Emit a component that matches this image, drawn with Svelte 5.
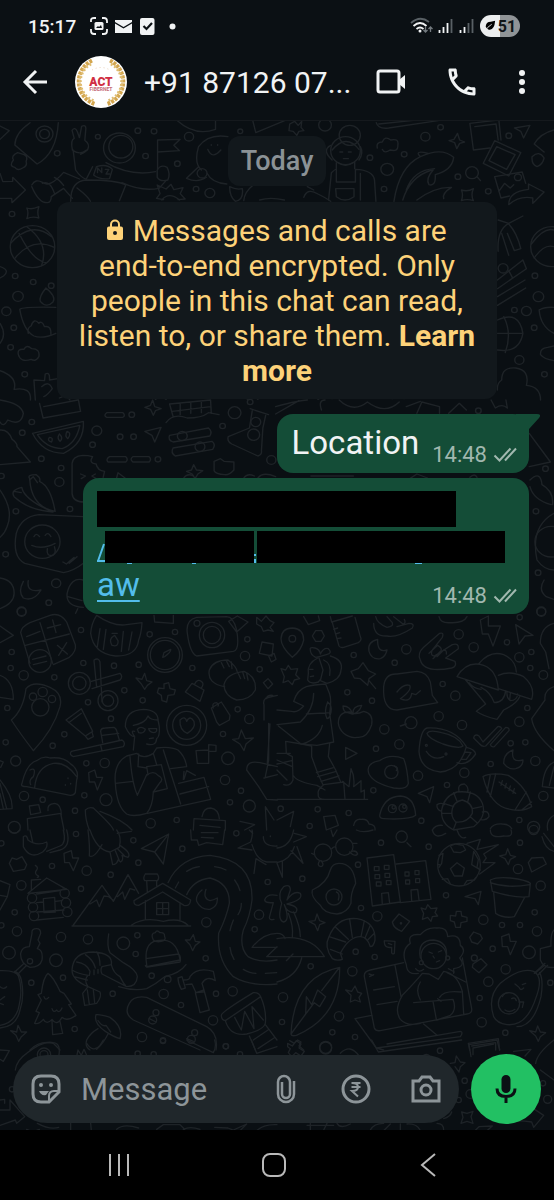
<script lang="ts">
  type Section = {
    x: number;
    y: number;
    sx: number;
    dots: number[][];
    lines: string[];
  };

  const messages = { first: "Location", second: "aw", time: "14:48" };
  let draft = $state("");

  // wallpaper doodles, drawn section by section at three times their size
  const third = 1 / 3;
  const wide = 0.3533;
  const sections: Section[] = [
    {
      x: 0, y: 120, sx: wide,
      dots: [
        [162, 100, 8], [277, 50, 7], [390, 32, 8], [436, 34, 8], [412, 108, 8], [502, 131, 8], [535, 50, 13],
        [680, 34, 7], [555, 207, 8], [594, 219, 14], [920, 15, 18], [1047, 113, 8], [1144, 103, 8], [1204, 50, 13],
        [1247, 22, 8], [1096, 148, 18], [1087, 207, 8], [1296, 170, 8], [1440, 47, 8], [1382, 214, 8], [1336, 158, 18],
        [34, 282, 8], [43, 468, 8], [94, 486, 8], [51, 529, 15], [18, 574, 13], [39, 623, 8], [30, 682, 8], [70, 763, 8],
        [145, 497, 8], [1424, 445, 14], [1514, 467, 8], [1524, 530, 15], [1456, 570, 8], [1490, 573, 14], [1512, 623, 8],
        [1470, 720, 13], [1541, 763, 8], [126, 42, 24], [126, 42, 14], [338, 84, 45], [342, 80, 34], [92, 380, 63],
        [1562, 380, 60], [572, 160, 14], [978, 92, 42], [990, 46, 30], [1466, 172, 10],
      ],
      lines: [
        "M85 8Q42 40 42 75L105 132Q160 100 165 8M50 98q-20 10-12 22q-14 18 4 22q8 12 22 2q14-6 10-20q6-14-6-20z",
        "M0 18L26 32L0 58M0 160L8 185L36 184V172L72 210L34 248L33 235H0",
        "M205 90q-6-30 5-35l-6-24q8-12 15 4l6 18l6-34q12-6 12 6l-3 36q16 12 8 28q-10 10-20 14M207 90L214 150q14 22 30 28L262 140M207 92q20 14 38-2",
        "M265 165l8-25q30-10 45 8l-8 28q-28 4-45-11zM276 158v-14l12 14v-14M298 148h10l-8 14h10",
        "M300 128Q370 170 440 155M345 188Q400 215 450 205L470 182M445 150q10-18 28-8q10 20 2 38q-22 6-30-8z",
        "M446 148V60L510 58L492 76L508 92L446 96M200 244Q200 182 245 180Q330 180 356 195L338 242M218 204Q250 230 256 244",
        "M90 195q10-20 30-8q20 18 60-30l45 20M90 200q20 50 45 48q10-2 10-18l35-25l25 30M120 190q22-10 34 30M180 196q-10-16-26-24",
        "M500 0Q550 50 610 28V0M645 50Q590 40 562 80Q548 130 570 150M528 175l34-35M586 160Q600 190 642 192M528 175Q560 190 584 172M588 88Q600 120 625 90M598 74v2M616 74v2",
        "M445 195l25 12l14-14l8 16l26-6l-8 18l14 16l-20 2M445 195l8 26l-10 14l20 4M458 240q20-26 50 0",
        "M650 200q0 30 16 44q24-4 20-38q-18 4-36-6zM716 196q-24 20-26 46M735 240q30-10 70 0M860 232q10-30 40-10q20 10 36 22M870 200l18 10",
        "M715 0L724 38L810 0M820 12l14-8l10 12l10-12l-2 18l8 10l-14 2l-6 12l-10-12l-12-2z",
        "M940 90Q980 40 1016 88M936 76Q910 90 940 120M1020 80Q1030 100 1016 120M952 128v20M1004 126v20M958 128q20 16 40 0M962 96h8M986 96h8M972 116h14",
        "M952 148V186H1006V148M930 240L938 158Q950 146 952 148M1006 148Q1056 150 1060 180L1064 244M950 206H1002V230Q976 250 952 230zM1020 160V240",
        "M1065 8Q1070 28 1100 24L1240 2M1072 12L1180 0M1068 84q-4-18 14-18q8-20 24-6q24-6 20 16q2 20-22 14q-16 12-22-2",
        "M1115 244Q1130 140 1190 110Q1250 80 1284 112Q1280 150 1232 164M1190 110Q1170 90 1212 100M1232 164Q1234 200 1214 194Q1204 176 1226 150M1150 210Q1170 150 1230 146M1140 240Q1160 170 1222 150",
        "M1295 40l6 20l14 6l-14 4l-8 16l-6-18l-16-6l14-4zM1350 170l10 12M1180 240Q1230 200 1278 202Q1250 220 1256 236",
        "M1330 10L1340 90L1386 84M1330 10L1412 0L1418 60M1344 20L1404 12L1410 60M1400 62L1474 98L1440 168L1368 130zM1406 80L1458 104L1434 148L1384 122z",
        "M1400 170L1478 156L1488 190M1400 170L1418 234L1442 228M1412 214l16-24l16 14l10-10M1440 254Q1440 214 1496 208V192L1540 216L1508 250V234Q1470 226 1440 254z",
        "M1456 24L1500 16L1482 54L1474 34zM1568 30Q1530 40 1512 72L1540 96M1506 110q20-20 34 4q-4 20-20 26q-16-6-14-30",
        "M1306 210q18 6 34-4q-8 18 0 36q-18-6-34 0q6-18 0-32zM76 264q14 6 34-4q-6 18 0 34q-18-6-34 2q6-18 0-32z",
        "M30 370Q90 300 146 350M42 415Q90 350 154 382M76 320Q140 370 118 436M54 340Q90 420 130 428M1504 372Q1540 320 1568 330M1512 414Q1540 370 1568 380",
        "M130 504Q160 530 150 546Q132 566 114 544Q110 530 130 504zM56 568Q66 560 158 562M56 568Q66 630 96 648Q120 658 158 640M80 640q-4-16 8-22q8-26 22-8q8-10 16 10q20-4 18 24",
        "M0 440Q30 450 10 468L0 474M0 610q20 34 0 60M52 704q-4-18 16-16q6-16 22-2q24 0 20 24q-8 16-22 8q-30 10-36-14M0 752Q50 770 40 808Q90 800 86 840M100 840L96 780L126 782l2-20q14-8 12 18l24-4M118 800q20-20 30 6q-14 20-24 24",
        "M1410 300l30 10M1440 310l40-22M1440 310q-34 20-30 84M1440 312Q1464 340 1474 386l-18 6L1436 340M1420 340l20 66",
        "M1408 480L1480 420M1408 506L1490 446L1480 420M1408 530L1486 480M1440 452l10 20M1408 556L1488 504",
        "M1408 600Q1470 570 1480 640Q1470 700 1408 690M1426 590Q1450 640 1430 698M1408 640H1480M1526 570Q1540 560 1568 562M1526 570Q1530 620 1568 640M1530 704q-2-20 20-22l18-4M1530 704q10 14 38 18",
        "M1420 780Q1420 740 1460 744Q1500 750 1490 796Q1530 800 1530 840M1420 780Q1406 790 1408 810M168 834q20-12 30 6M440 838q16-12 30 0M700 838q10-18 30 0M900 838l20-14l20 12M1110 836q16-16 34 0",
      ],
    },
    {
      x: 0, y: 400, sx: wide,
      dots: [
        [90, 66, 8], [63, 98, 8], [274, 92, 14], [262, 134, 8], [117, 176, 8], [173, 204, 8], [168, 246, 13], [198, 327, 8],
        [45, 334, 8], [16, 463, 8], [373, 44, 8], [340, 110, 8], [378, 110, 8], [447, 178, 8], [630, 78, 8], [664, 38, 18],
        [708, 6, 8], [724, 66, 14], [718, 104, 17], [768, 180, 13], [516, 108, 14], [566, 140, 14], [4, 228, 8], [120, 425, 50],
        [159, 550, 13], [138, 608, 8], [61, 634, 13], [1354, 32, 8], [1517, 334, 8], [1523, 518, 8], [1532, 634, 13],
        [1560, 425, 46], [1544, 206, 8],
      ],
      lines: [
        "M0 0Q60 10 66 40Q60 80 22 60Q10 84 0 66M112 10L122 54L228 34L222 0M124 20L220 0M0 90Q24 88 34 118Q50 130 48 140L86 186L0 194",
        "M92 100L236 64Q240 130 180 160Q120 160 92 100zM106 104L226 76Q216 130 176 146Q130 144 106 104M140 112q12 0 6 14q-14-4-6-14M168 102q12 12 2 22q-10-10-2-22M190 94q14 4 2 22q-10-8-2-22",
        "M302 38h46q8 8 0 14h-46q-10-6 0-14M310 170h46q8 8 0 16h-50q-8-8 4-16M376 170h46q8 8 0 16h-46q-10-8 0-16M432 0l6 20l18 6l-16 6l-6 14l-8-18l-16-6l16-6z",
        "M480 12L490 50M480 12L596 0L598 40M470 68q20-30 60-14q40 0 60-16l30 6M488 34L596 20M510 10v34M540 6v34M570 6v32",
        "M410 94L456 82L438 126L430 106zM480 106L590 84q12 10 4 24L490 126q-16-6-10-20M490 144L600 124q12 10 2 24L496 168q-14-10-6-24",
        "M708 26L760 44M714 32L706 84L646 110q-4 14 10 22L730 168q12-4 10-16L744 84L752 46",
        "M606 184l18-8l10 8l28 2v24q-14 16-26 14q-26-2-30-12zM548 194l8 16l18 2l-14 10l-8 14l-8-14l-16-8l14-4zM330 234l4-16l20 16",
        "M204 280V190Q206 168 234 166Q250 166 262 170q-12 20 10 22q4 20 24 22l-4 18M204 280q2 26 34 26M228 222l14 6l-12 8M270 222l-10 6l12 8",
        "M84 236q-8-12 18-12q14 10 10 20Q144 260 156 334Q88 320 84 236zM62 264Q70 300 150 336M62 262Q28 270 40 290Q80 330 150 336M84 240l10-10l12 18M40 274l20 4",
        "M235 350L110 344Q60 350 46 400Q34 470 70 490L180 518Q210 512 236 490M96 410q6-14 16 0M128 406q8-12 16 4M90 436Q120 450 156 430M134 446q-4 24 16 20q10-8 4-26M178 486l10 6l22-20M196 490l22-20",
        "M0 270Q40 330 20 380Q14 400 0 412M0 534Q40 540 40 580Q40 610 0 626M66 544Q50 576 66 594Q96 606 116 570Q74 580 80 542M236 540Q200 530 190 580Q186 620 236 622M214 640l6-14M192 590l40 12",
        "M780 20Q850 0 870 0M780 42L846 2M910 30q-10-30 10-30M960 0q40 40 80 6q50 40 90 0M1150 20l40-16M1180 40l14-34l50 14v20M1270 40l30-30l20 20M1390 0l12 24q20-14 34 0l-4-24",
        "M1498 100L1558 186L1498 200M1500 240q30-30 34 14q34 20 30 60M1500 260q10 40 60 54M1568 340Q1500 380 1520 480Q1540 510 1568 510M1540 540q-18 30 6 50l22 8",
        "M520 234q10-16 28-6M690 234q10-16 30-6M730 234q14-20 50-4M880 228h120M1160 236l20-14l30 12M1330 232q14-14 20 0",
      ],
    },
    {
      x: 0, y: 610, sx: third,
      dots: [
        [243, 60, 8], [449, 73, 8], [525, 66, 8], [591, 40, 9], [636, 75, 38], [636, 75, 26], [742, 88, 8], [735, 138, 14],
        [35, 126, 8], [32, 174, 8], [71, 196, 14], [163, 202, 8], [250, 159, 8], [342, 167, 8], [416, 164, 8], [577, 174, 8],
        [779, 178, 8], [373, 241, 8], [428, 271, 8], [264, 277, 8], [333, 326, 8], [193, 373, 8], [158, 407, 8], [17, 397, 8],
        [22, 294, 8], [47, 453, 15], [259, 460, 8], [314, 459, 14], [713, 298, 8], [748, 327, 14], [669, 372, 8],
        [684, 445, 19], [675, 510, 14], [723, 542, 8], [690, 577, 8], [748, 588, 18], [72, 558, 14], [128, 569, 8],
        [253, 556, 8], [225, 602, 8], [318, 569, 18], [452, 640, 14], [530, 630, 8], [43, 652, 18], [65, 6, 13], [495, 135, 52],
        [495, 135, 44], [120, 153, 34], [121, 292, 26], [99, 260, 11], [128, 246, 14], [156, 267, 11], [238, 220, 33],
        [238, 220, 20], [324, 272, 30], [324, 272, 17], [560, 346, 60], [560, 346, 42],
      ],
      lines: [
        "M62 68Q64 50 90 38L150 16Q180 6 200 36L226 104Q230 124 208 142L160 164M62 68L90 160M120 38L158 160M76 106L208 72M80 80L120 64M142 54L182 44M158 30L168 68M172 106L202 132M200 98L176 136M98 148l40-10M100 164l40-10",
        "M0 48L40 76L0 98M272 70Q274 40 290 16Q340 50 380 44L426 38Q424 70 416 90Q410 140 346 138Q280 130 272 70M300 56l-8 54M318 58l-8 60M344 76q-20 10-8 30q20 6 18-14zM370 64l-6 60M396 66l-10 54M336 70h16",
        "M462 16l2 20l56 4V16M488 142l4-14l20-10q2 8-18 22zM562 70Q556 30 590 22L680 20Q700 20 710 60Q720 120 700 124L590 138Q570 130 562 70M686 34l26-16l32 18l-34 30zM770 22l14 12l14-16l12 14l12 6l-12 14l10 12l-16-4l-14 4l-6-14l-14-8z",
        "M786 96l34 6l-4 36l-38-8zM806 138l16-8l6 18l-14 8zM790 218l14-12l14 16l-14 14z",
        "M78 236Q100 210 150 232Q190 250 180 290Q160 360 100 422Q60 370 34 330Q70 300 78 236M0 196Q40 210 40 268L0 262",
        "M282 150q14-8 18 6l6 120M282 152l8 80M274 214L360 190q10 10 0 20L276 236M408 204l18 4l8-18l6 22l16 4l-14 10l-8 12l-10-16zM492 222l14-4l4 18l16 4l-4 14l-18 2l-4 20l-14-4l-2-16l-12-8l4-14l16 2z",
        "M556 246l20-26l36 20l-12 34zM584 222q8-16 20-8q10 6 0 20M628 180Q620 220 674 230M628 180Q640 150 684 150Q710 170 712 186M672 224Q680 190 732 184Q770 200 766 240Q750 270 710 270Q672 256 672 224M664 158l8 16M680 154l8 16M694 156l2 20M714 188l8 18M728 186l6 20M740 190l4 20",
        "M198 330L244 296L278 364L256 378zM206 338l38-28M256 378l8 10l16-8l-4-14M634 294l30-18l26 40l-2 14l-30 16l-8-10zM640 294q-6-16 10-16q8 6 4 10M698 388l18-2l8-26l12 26l24-2l-22 18l-6 20l-12-20z",
        "M214 424L366 390q12 8 4 20L220 440q-14-6-6-16M302 406l4 16M308 398L302 364q0-10 14-10l26-2q8 4 10 18l6 20M306 376l50-6",
        "M540 330q16-14 20 4q10-20 22 0q6 20-20 36q-24-10-22-40",
        "M400 420L404 380Q390 380 376 350Q376 300 430 298Q474 300 474 330L478 350Q480 380 470 386Q468 410 440 402M404 380Q390 360 404 364M400 346Q436 340 444 318Q450 330 474 330M412 358q10-12 24 0q-4 14-20 10zM446 356h24q2 12-10 12q-12-2-14-12M448 386l12-2",
        "M346 520Q340 460 380 438L410 430Q430 450 460 430L470 414Q510 408 534 420Q556 440 560 470L512 476M346 520L400 514M390 440Q396 520 412 556L440 494M346 520Q350 590 380 612Q400 622 440 610Q458 590 460 546L502 536L484 464L440 470L444 494M416 432L414 470L440 474M460 430l10 34",
        "M440 496q20-16 34 0q20 10 4 24l-18 26M490 420L542 582M442 610L632 568L612 502L536 520M540 552L626 530M552 508l8-26l26 14M552 484l-2 24M588 422l4 38h34v-40zM626 404l22 2v18h-22z",
        "M66 520Q80 460 110 452Q130 436 150 444Q190 440 210 460Q240 480 230 510L226 548Q220 560 200 554L80 530Q60 530 66 520M104 532Q110 470 160 460Q200 456 230 500M90 480q20-10 10 20q-14 10-8 24",
        "M204 504v2M196 524v2M212 520v2M266 488l18-8l6 22h18l-16 38l-8-24h-16zM0 452l10 4l-8 16M0 510Q40 560 36 596L0 598M0 520l20 76M0 550l10 46",
        "M88 588l28-4l6 24l-30 6zM84 660l-2-34l100-16l10 50M144 602q-4-20 20-22q20 2 20 36M256 600q10-10 24-6Q340 650 340 660M256 600q0 30 12 60M300 604Q370 630 396 660",
        "M580 660l2-34l94 6v28M606 620q4-26 26-26q24 4 26 32M600 646l60 6M720 634l44 10l-30 16M800 660l-4-70l26 40M792 330V284q-4-12 6-20l34-8M800 266q0-12 18-10M810 342l-8 116M740 480Q740 450 780 458L832 470M740 480L776 530L800 568L832 570M792 504l40-10M806 340v110l-10 50",
      ],
    },
    {
      x: 277, y: 610, sx: third,
      dots: [
        [46, 86, 10], [230, 135, 8], [388, 118, 14], [353, 158, 8], [545, 73, 14], [590, 112, 14], [690, 97, 8], [763, 126, 8],
        [727, 142, 14], [760, 174, 8], [799, 195, 13], [497, 222, 8], [535, 257, 14], [211, 247, 8], [285, 272, 8],
        [485, 319, 14], [555, 345, 14], [402, 338, 18], [322, 358, 14], [297, 416, 8], [367, 403, 14], [751, 294, 8],
        [727, 335, 14], [701, 400, 8], [745, 397, 8], [775, 453, 14], [641, 462, 8], [562, 488, 14], [510, 525, 8],
        [423, 497, 14], [289, 541, 8], [799, 558, 14], [727, 630, 8], [770, 652, 18], [433, 632, 8], [215, 609, 8],
        [122, 598, 8], [11, 596, 8], [98, 648, 8], [793, 6, 13], [728, 22, 8], [346, 596, 12], [378, 594, 12], [343, 486, 20],
        [448, 406, 3], [507, 432, 3], [350, 592, 5], [382, 590, 5],
      ],
      lines: [
        "M46 142Q12 110 12 86Q14 54 46 54Q80 56 80 90Q74 120 46 142M116 62h18l8 16l-10 16h-16l-10-16zM80 20l14 24l34-12l-4-14M160 20l4 16l62-18M166 38L186 108Q190 114 200 112L244 98Q256 90 250 80L234 22M170 58l12-4M176 72l12-4M180 86l12-2",
        "M290 40Q290 80 330 78Q360 84 406 54Q414 40 396 40L360 50M296 20Q300 40 330 52Q350 50 346 38L330 20M350 20l28 22q10-2 4-14M302 88Q270 96 276 124Q284 150 310 146Q326 140 330 120Q300 130 302 88",
        "M488 70q14-4 8 12L466 120q-8 16 6 18L526 104q20-6 18 12L506 144l28 10q6 16-10 20Q440 190 430 150Q420 130 440 112zM456 130l26-24q14 8 10 16L468 146M480 140l20-20q10 0 8 12",
        "M486 20Q490 40 520 38Q560 40 570 20M610 30l24-12v30h36l-22 60l-14-36h-18zM716 44L768 76L744 78L726 102zM831 40Q790 50 790 100L806 126l10 50",
        "M540 200Q570 150 620 166Q660 180 664 240zM606 160Q640 120 680 134Q716 150 718 186M664 196Q700 180 740 200Q776 230 764 268L664 236M566 210Q600 250 626 282L598 304Q620 320 660 328L680 300Q720 280 728 260M576 218q14 18 36 20M612 232q28 14 40 46q30 0 34-36M690 244q-2 20 10 28q20 0 22-20M700 250l-2 20",
        "M12 176l14 4l8-14l8 12l20-2l-6 18l12 12l-16 4l-6 14l-12-12l-16 6l4-18zM222 184l22-8l14-18l16 24l22 10l-20 14l-4 20l-22-20l-18-2zM276 212l20 24",
        "M320 230Q324 190 360 192L420 184Q450 186 460 216L466 256L482 278L360 300Q316 300 320 230M360 246Q380 220 398 226Q406 240 370 266Q400 280 404 250L416 254L430 242",
        "M370 348l18-6M184 340Q184 304 220 306Q236 316 260 304Q290 310 284 344Q270 386 240 382Q220 386 200 370Q186 356 184 340M226 312l-14-4q-14-2-14-20q22 0 28 24M228 308q0-20 26-22q-6 20-26 26",
        "M426 424Q430 360 450 354Q530 350 568 410Q550 480 490 486Q430 480 426 424M450 370q8-12 44-2q50 10 64 40q-10 10-60-6q-46-18-48-32M568 412q26 6 28 20Q570 470 540 458M552 448l12-22l18 2l-14 20zM448 424q20 30 52 16",
        "M592 378q6-6 14 0l12 18l44-46q10-2 12 6L626 408q-10 4-18-6l-18-18zM640 404L686 352q12 0 10 10L652 410q-10 2-12-6M206 412L240 430L206 448zM276 492Q264 460 308 452Q340 430 380 446Q390 470 394 520Q390 540 350 534Q290 520 276 492M352 468q14 4 6 14",
        "M708 420Q680 430 680 460Q694 480 716 476Q738 470 738 450Q700 460 708 420M424 550L470 530L458 578L450 560zM618 500Q640 486 694 496Q750 530 764 590Q740 606 700 598Q640 590 618 500M640 494L630 546M656 492L640 560M748 546L714 600M764 576L734 600M666 516L716 550M676 512l-4 14M688 520l-4 14M700 528l-4 14M712 536l-4 14",
        "M308 616Q320 560 370 558Q412 560 416 616Q400 630 320 626Q308 626 308 616",
        "M494 600Q500 560 540 546Q600 540 616 580Q630 620 590 650L530 660Q490 640 494 600M526 596Q530 576 556 570Q590 580 586 610Q570 640 536 636Q520 620 526 596M546 544q-6-22 16-22q14 8 10 24M494 604q-16-4-14-20q14-8 22 0M616 606q20-6 20 14q-10 14-26 8M500 580l30 10M530 548l10 26M580 546l-8 30M614 590l-28 6M600 638l-20-18M530 656l8-20M496 610l28 0M466 660q10-16 30-14",
        "M831 230Q800 240 804 270L764 326Q770 370 831 422M831 456Q800 470 796 530L831 534M831 470l-14 56M140 620l34-4l10 30l-36 14zM230 646q4-20 22-18q20-2 24 14q20 2 18 18M640 656q10-16 36-14q20 0 28 14M0 630L50 604L40 650M812 660q-6-30 19-44",
        "M100 120q-4-10 14-6q14 4 16 18q10-20 24-16q14 14-6 18q-20 6-32 8q-16-8-16-22M122 144Q90 160 94 190L92 210Q100 224 124 216L132 206M126 144L138 180L130 212M160 138Q200 150 192 180Q190 210 150 220L130 212M140 150q24 10 18 46M98 178h10M100 200l10-2",
        "M88 230Q110 224 146 222L158 252Q164 270 158 310L170 396L120 406L72 402L4 348M88 230Q60 240 50 274L80 288Q60 310 44 304L0 300M110 250Q110 300 70 336L0 344M88 312l70-4M152 276q14 10 10 30q-4 20-12 20q-10-20 2-50M136 346q-10 40-60 56",
        "M26 394L28 430L46 440L48 510Q40 530 20 524M26 394L74 402L104 408V440L122 490L138 524M0 430h40M0 462l44-10M0 480l30 30M158 400L154 440L176 480L190 514M118 488l54-16M122 500l56-16M132 514l54-16M140 524Q120 540 124 552Q120 570 150 568H204L200 516L140 524M50 498Q60 516 120 526L144 540M0 568H272M196 514L216 530L222 476Q234 500 230 530L252 512V546L262 540V568M0 450L46 470",
      ],
    },
    {
      x: 0, y: 830, sx: third,
      dots: [
        [228, 12, 8], [400, 31, 8], [156, 108, 8], [260, 122, 14], [332, 134, 8], [415, 98, 8], [547, 56, 8], [709, 10, 8],
        [64, 166, 14], [243, 176, 8], [44, 247, 8], [51, 304, 14], [183, 321, 14], [264, 328, 14], [27, 368, 19],
        [168, 391, 19], [370, 340, 19], [412, 316, 8], [407, 372, 8], [619, 277, 14], [617, 385, 8], [803, 156, 8],
        [777, 254, 14], [764, 298, 8], [698, 484, 14], [648, 491, 8], [639, 571, 14], [678, 649, 8], [455, 437, 8],
        [491, 492, 14], [543, 525, 8], [338, 491, 8], [189, 443, 8], [94, 458, 8], [224, 597, 8], [426, 621, 14],
        [489, 631, 8], [90, 394, 8], [96, 204, 14], [99, 232, 14], [102, 258, 14], [194, 190, 14], [198, 218, 14],
        [202, 246, 14], [4, 40, 8], [4, 286, 8], [503, 448, 10], [468, 548, 9], [458, 570, 12], [584, 608, 9], [574, 628, 12],
      ],
      lines: [
        "M70 20q10-8 14 10Q110 50 140 36Q146 50 128 66Q90 90 70 50zM90 0l8 36M190 0Q200 40 180 48L140 64M200 0Q214 50 180 60L150 68M26 0Q44 18 60 0",
        "M264 0Q270 50 268 78Q280 84 296 60L306 44M270 0Q290 60 330 66L358 52Q366 20 350 0M352 10L394 4M330 66L338 104Q350 104 354 90L362 96Q372 90 366 76L384 82Q396 70 360 46M346 62l12 30M354 58l20 20",
        "M424 56L506 12L490 102L464 66zM464 66L500 20M192 70L214 62L218 84H236L220 122L208 98H194zM28 100L36 84L50 88L66 80L80 104L74 118L40 124zM572 0L574 30H592L596 46L620 38L668 44L674 0M604 8h50M604 22l36 2",
        "M106 106q10 6 4 14q-8 10 2 16q8 4 0 6M84 190L140 144L200 178zM94 180V150L122 148M110 192L180 182M110 218l20-2M166 214l20-2M110 270L190 262M130 206l34-4l2 44l-34 2zM112 246l80-6",
        "M218 288L306 166L340 214L384 134L416 190M270 222L290 210L298 230L312 198L326 200L342 212M352 200L368 186L374 208L390 176L404 180M216 288H572M402 212L488 160L572 210Q570 230 552 226L488 186L416 226Q400 226 402 212M436 212V268M540 218V270M394 286Q430 260 490 274Q540 262 564 286M470 218h36v36h-36zM488 218v36M470 236h36M436 132h36q8 12 0 20h-38q-6-8 2-20M440 152l2 34M470 152v16",
        "M504 158Q540 80 630 76Q760 90 756 210Q750 260 730 300Q716 350 744 380Q780 400 831 390M560 194Q580 150 630 144Q690 160 688 220Q680 260 656 310Q650 390 700 440Q750 470 831 462M526 174l10-18M560 124q18-12 38-14M644 110q20 2 34 10M704 150q12 16 16 32M724 220q0 20-10 34M700 270q-8 20-10 32M690 352q2 20 12 36M730 418q20 12 38 12M796 430l34-2",
        "M606 180Q586 196 590 214Q602 240 630 238Q654 230 652 204Q640 210 630 212Q608 206 618 178M556 330l14 0l10-16l6 20l14 2l-14 10l-8 16l-8-18zM756 352Q790 310 831 310M756 352H831M800 380L831 350M800 380H831M831 196Q800 190 794 210Q796 220 820 218L808 262Q808 272 822 268",
        "M714 54L752 36Q760 10 756 0M716 54L756 60M762 130L768 86L798 104M756 44Q770 90 800 96L831 96M790 20Q790 50 831 48M748 0l10 10M811 18v2",
        "M0 152L30 164L22 200L0 196M22 200L0 240M96 310q-2-14 14-14q12 0 12 14L114 330L120 340L112 356Q130 360 126 390Q120 412 90 412Q60 400 62 370Q66 350 88 350zM80 406L56 430M70 402L44 426M0 422Q50 420 56 440Q70 480 54 540Q40 580 0 586M44 424Q60 430 64 450Q74 500 60 540Q50 590 0 594M0 470q10 10 20 0M0 510l14-10M0 520l10 4",
        "M144 430Q130 440 124 490L114 494L124 510L108 544L118 548L104 580Q116 584 130 568Q140 586 156 568Q170 590 186 562Q200 576 228 556L206 524L214 522L192 490L180 484Q160 440 144 430M132 500q4 14 14 2M156 536q4 14 14 4q8 12 16-6M156 572L158 614L188 610L180 574M32 602l18 4l4-20l10 20l16 0l-16 14l-8 14l-8-18z",
        "M264 470Q216 450 216 420Q220 366 280 366Q340 370 334 404L306 410Q300 420 306 432L380 470Q410 470 412 440Q410 420 370 398L330 368Q320 350 326 312M334 404Q340 430 360 440Q370 460 376 466M216 420Q230 430 264 436M230 396Q260 400 270 424M256 374Q280 390 286 414M290 366Q300 380 300 406M264 436Q250 450 264 470L248 490L254 526L290 520Q306 500 300 486L264 470M262 480l6 44M280 480l4 38M270 424l-2 12M282 420v14M294 418v12M222 440L262 450",
        "M356 470Q400 484 440 476Q470 460 494 440Q540 430 558 404M440 404Q430 340 470 332Q530 320 540 390L440 410zM438 386L536 372M436 406q0 8 16 4L540 396q4-10-2-22M460 330q-10-20 6-22q4-10 14 0q14-2 14 12q6 10-10 14q-14 4-24-4",
        "M388 520Q400 496 440 502L620 590Q656 610 648 660M388 520Q370 550 400 570L600 660M448 566l20 10M560 626l20 8M288 554Q300 552 330 562Q370 590 360 626Q340 620 316 604Q280 580 288 554M294 596Q270 610 260 630Q254 650 270 660M324 612Q310 640 290 658M294 572q14 20 24 14l14 20M90 660Q120 630 160 640L180 660",
        "M534 444l12-4l10 34l-12 4q-10-18-10-34M552 450Q570 450 570 440Q590 410 640 424L646 452Q620 436 606 460L612 480L588 488L576 462L558 464M586 488L600 548L628 540L612 480M588 488l22-2",
        "M664 556Q664 546 760 488Q776 486 782 500L676 572Q664 570 664 556M676 572Q690 620 740 612Q790 600 796 580Q800 540 782 500M704 562L724 600L734 544L762 596L756 530L790 570M748 618L766 660M796 584L831 630M760 630l44-30M774 656l48-32",
      ],
    },
    {
      x: 277, y: 830, sx: third,
      dots: [
        [312, 38, 8], [455, 50, 8], [729, 38, 8], [723, 117, 14], [76, 146, 8], [243, 104, 8], [374, 20, 17], [138, 68, 26],
        [202, 50, 26], [171, 201, 24], [252, 234, 8], [301, 259, 14], [507, 196, 8], [619, 269, 14], [675, 285, 8],
        [729, 285, 8], [773, 247, 8], [791, 167, 14], [780, 304, 14], [756, 367, 19], [647, 356, 8], [686, 418, 14],
        [634, 455, 14], [608, 504, 8], [614, 577, 14], [685, 608, 8], [236, 365, 8], [293, 381, 8], [101, 409, 8],
        [226, 424, 14], [18, 502, 14], [186, 559, 14], [15, 576, 8], [166, 607, 8], [234, 621, 8], [820, 458, 8],
        [546, 104, 64], [470, 378, 38], [696, 520, 32], [372, 280, 2], [592, 384, 9], [770, 0, 14], [146, 652, 18],
        [433, 398, 6], [512, 384, 6],
      ],
      lines: [
        "M0 54Q40 50 50 0M52 10L88 20L50 36M42 62L78 100L60 50M0 98Q40 90 52 50M16 94V142L0 100M162 0l6 20l12-20M238 0q20 10 50 0M390 38l12 12M466 0q8 30 40 10M540 0q10 30 26 22M640 0q0 26 40 18q30 4 22-18",
        "M164 56q8-8 12-4M112 74l-8-4M128 92q-10 16 4 18q12-4 0-18M228 40h12M224 64q14-4 18 8q-8 10-24-6",
        "M186 100Q230 100 236 160Q220 190 222 220Q210 250 180 252Q140 250 130 226Q100 200 106 180Q150 160 160 120Q166 100 186 100M178 186q12 4 6 24",
        "M270 84L350 74L370 216L286 228zM358 102L446 92L462 208L370 218M292 110h14v12h-14zM322 106h14v12h-14zM294 134h14v12h-14zM324 130h14v12h-14zM298 156h14v12h-14zM328 152h14v12h-14zM316 224L314 190L334 188L338 220M384 126h12v12h-12zM414 122h12v12h-12zM386 150h12v12h-12zM416 146h12v12h-12zM404 212L402 180L422 178L426 210",
        "M540 98L562 114L556 138H532L520 116zM486 76L498 70L494 100L486 112M520 48L536 42L558 46L566 60L550 68L530 66zM590 64L604 88L600 112L610 120L584 104zM496 148L512 146L520 162M562 164L570 152L592 150L598 142M570 40L610 28L600 58L664 44L620 72L628 84L618 98L654 98L608 132M482 104h6",
        "M668 78l18-4l6-18l8 20l16 4l-16 8l-6 16l-10-18zM754 98l10-14l34-2l10 20l-44 24zM640 150Q660 140 700 144Q750 150 760 160L756 200Q720 206 646 184zM640 158Q690 176 758 164M650 188L656 250Q680 266 712 260L742 204M564 200L612 184L604 224L594 206zM795 20q10 40 36 44M800 10l31 40",
        "M14 220Q0 190 20 170Q40 160 40 180L30 210Q50 180 70 190Q80 210 30 222Q70 230 56 248Q30 250 22 224Q40 270 20 276Q0 270 14 220M34 250Q50 290 46 320M50 246Q70 290 70 320M0 310q20 0 24 16M0 326Q100 310 142 380H0M74 384Q60 440 0 456M28 392l20-20M96 274l18-2l6-20l8 20l16 6l-16 6l-6 18l-8-18z",
        "M166 386Q140 350 156 320Q180 260 240 266Q296 276 294 330Q290 350 280 350Q270 320 250 320Q216 320 190 370L196 388Q180 394 166 386M156 320L206 336M176 292L214 328M218 268L226 322M262 272L252 320M280 286L264 324M160 358L196 372M272 330l20-20M346 276l20-24l32 22l-24 30q-24-8-28-28",
        "M432 234l14 4l6-14l10 12l18-2l-6 14l8 10l-16 2l-4 14l-10-12l-16 6l4-18zM520 256l16 2l2-14h14l2 14l16 4v12l-18 4l-2 14h-14l-4-16l-12-4zM322 332L354 334L352 370Q346 374 344 368V352Q320 356 322 332M334 340l10 4M578 322l12-16l20 8l6 12l-14 16l-18-6zM674 320L696 312L700 334H718L700 374L692 350H676zM588 402L612 386L630 404L606 428L586 412zM831 300Q820 310 822 348L790 356V390Q800 416 831 412M800 408L774 430",
        "M424 430Q390 436 388 404Q370 360 400 340Q390 310 430 314Q450 290 480 294Q510 290 512 320Q550 310 550 346Q570 360 548 384Q570 410 530 416L530 430M430 384Q420 330 470 330Q514 336 508 380M456 366l10 4M484 366l10-4M468 378l4 6M478 396l10-4M416 416q10 14 24 2M514 416l18 10",
        "M262 440Q260 424 280 420L380 398M262 440L292 594Q296 604 310 602L570 552Q586 550 584 536L556 384M354 406L372 500M276 432l12 4M290 434l-12 6M290 480L352 470M300 524L360 514M456 432L484 448L500 424Q540 430 556 484L560 552M456 432L436 430Q420 450 376 496Q350 540 370 568Q390 590 430 580M430 456Q414 480 430 510M410 518L528 508Q540 540 520 556L480 570M468 514L478 568M488 502Q500 480 552 486M482 506l10 8M510 428L566 456",
        "M234 566L298 654L550 620Q560 606 550 604L330 642M234 566L284 556M440 582L480 616M298 654L320 660",
        "M42 612Q50 440 188 412Q190 560 58 616Q44 620 42 612M42 612L86 552M186 414L134 482M86 552L88 500L104 524L122 480L146 500L128 530L112 518L86 552M206 480l18 4l10-16l8 18l12 4l-8 12l4 14l-16-6l-14 6l2-20zM38 632l14 8l10-10l10 6l-6 12l14 12",
        "M650 560Q630 500 670 460Q730 410 770 424Q800 440 778 500Q750 590 690 584Q660 580 650 560M788 428Q800 450 792 500Q770 590 720 590M714 462l10 8M736 464l10-4M726 472q4 12 14 2M676 500q8-14 20-12M704 506q10-6 14 6M684 540q14 10 30-2M726 516l14 0l-4 16M772 430L804 400M782 436L812 406M758 602l18 4l6-18l8 18l16 2l-16 12l-6 14l-8-16zM574 640L664 626L668 660M574 640L578 660M584 648L656 638V660",
      ],
    },
    {
      x: 0, y: 1040, sx: third,
      dots: [[413, 41, 8], [461, 43, 8], [489, 3, 8], [677, 19, 8], [720, 43, 8], [132, 44, 20], [132, 44, 12], [36, 148, 8]],
      lines: [
        "M0 30L28 32L10 64L0 58M176 50Q184 10 160 8Q130 0 80 40Q50 60 46 90M230 50L234 30L244 46L252 28L262 50M260 10Q280 40 300 16L310 0M560 0L640 38Q650 20 644 0M754 0L770 40L831 20M0 180L14 178V190M0 210H30V180L74 230L50 250L46 240L0 256",
        "M80 268l18 8l20-8M112 250Q150 270 176 262M212 250V272M272 250l2 22M350 268q20-18 66-4M470 268l20-14h50l14 14M550 268q20-10 50 0M644 262l40 2l20 8M700 270l40-18l-20 20M770 272q20-20 61-18",
      ],
    },
    {
      x: 277, y: 1040, sx: third,
      dots: [[146, 24, 18], [489, 32, 8], [563, 122, 8], [580, 162, 13], [812, 178, 12], [545, 180, 8], [798, 130, 8]],
      lines: [
        "M32 10l14 8l12-16l14 10l-6 12l16 10l-10 14l-16-10l-12 12l-10-12l6-12l-8-6zM190 40q30-30 56 8M284 0L304 36L554 0M520 70l14-2l4-20l12 18l14 2l-14 12l-4 16l-12-16M582 50L576 14L660 0L668 30M588 44V24L650 12M710 34L762 28L744 48M831 0Q780 40 776 70M790 90L831 120M554 216l16 4l18-6l-6 16l6 20l-18-6l-18 6l6-18zM700 244Q720 210 764 216V202L800 226L770 262L764 246Q730 240 700 244M596 270l10-10l40-2l-16 14",
        "M440 46q10-6 18 2M100 250v20M150 250l-10 20M180 250q10 18 40 2M90 256h80M280 270q10-20 40-20M340 252l-20 20M370 252v20M390 252Q420 250 430 272M480 250q20 0 20 20M500 236Q520 230 524 216",
      ],
    },
  ];
</script>

{#snippet ticks()}
  <svg class="ticks" viewBox="0 0 24 18" aria-label="Delivered">
    <path d="M1.5 9.5 6.5 14.5 17.5 2.5M12 14.5 23 2.5" />
  </svg>
{/snippet}

<div class="phone">
  <div class="status">
    <span class="clock">15:17</span>
    <svg class="notes" viewBox="0 0 88 20" aria-hidden="true">
      <g fill="none" stroke="#f1f3f4" stroke-width="1.8">
        <path d="M1 6V4q0-2 3-2h2M12 2h2q3 0 3 3v2M17 13v2q0 3-3 3h-2M6 18H4q-3 0-3-3v-2" />
      </g>
      <rect x="4.500" y="6" width="9" height="8" rx="1.500" fill="#f1f3f4" />
      <path d="M6 12l2-2 1 1 2-2 1 3z" fill="#0b1014" />
      <path d="M25 4h17v2l-8.500 5L25 6zM25 7.500l8.500 5 8.500-5V17H25z" fill="#f1f3f4" />
      <rect x="50" y="2" width="14.500" height="17" rx="2" fill="#f1f3f4" />
      <path d="M53.500 10l3 3 5.500-6" fill="none" stroke="#0b1014" stroke-width="2.200" />
      <circle cx="82.500" cy="10.500" r="3" fill="#f1f3f4" />
    </svg>
    <svg class="signal" viewBox="0 0 66 22" aria-hidden="true">
      <g fill="none" stroke-width="1.800">
        <path d="M1 8Q10 0 19 7" stroke="#596065" />
        <path d="M3.500 11Q10 5 16.500 11M6.500 14Q10 11 13.500 14" stroke="#f1f3f4" />
        <path d="M15.500 12v5M13.500 15l2 2 2-2M20.500 17v-5M18.500 14l2-2 2 2" stroke="#737a7f" stroke-width="1.300" />
        <path d="M29.500 15v3M33.500 12v6M37.500 8v10M50.500 15v3M54.500 12v6" stroke="#f1f3f4" />
        <path d="M41.500 4v14M58.500 8v10M62.500 4v14" stroke="#596065" />
      </g>
      <circle cx="10" cy="16" r="1.500" fill="#f1f3f4" />
    </svg>
    <span class="battery">
      <svg viewBox="0 0 14 14" aria-hidden="true">
        <path d="M2 8Q2 2 8 2l5-1q-1 12-8 10-2-1-3-3z" />
        <path d="M1 13Q4 8 9 5" fill="none" stroke="#eceeef" />
      </svg>51
    </span>
  </div>

  <header>
    <button class="back" aria-label="Back">
      <svg viewBox="0 0 26 26"><path d="M14 2 3 13l11 11M3 13h22" /></svg>
    </button>
    <svg class="avatar" viewBox="0 0 52 52" role="img" aria-label="ACT Fibernet">
      <circle cx="26" cy="26" r="26" fill="#fff" />
      <g fill="none" stroke="#d3a64f">
        <path d="M17 4.500A23.500 23.500 0 0 0 20 48M35 4.500A23.500 23.500 0 0 1 32 48" stroke-width="4" stroke-dasharray="3 1" />
        <path d="M16 8A20 20 0 0 0 20 45M36 8A20 20 0 0 1 32 45" stroke="#dfbd72" stroke-width="3" stroke-dasharray="2 2" />
        <path d="M17 14q9-5 18 0" stroke="#ecd3bc" stroke-dasharray="1 3" />
      </g>
      <text x="26" y="30" class="act">ACT</text>
      <text x="26" y="35" class="fibernet">FIBERNET</text>
    </svg>
    <h1>+91 87126 07...</h1>
    <button aria-label="Video call">
      <svg class="video" viewBox="0 0 30 26">
        <rect x="2" y="2" width="21" height="21" rx="2" />
        <path d="M23 11l6-5v14l-6-5z" fill="#f1f3f4" stroke="none" />
      </svg>
    </button>
    <button aria-label="Voice call">
      <svg class="call" viewBox="2 2 20 20">
        <path d="M6.540 5c.06.890.210 1.760.450 2.590l-1.200 1.200c-.410-1.200-.670-2.470-.760-3.790h1.510m9.860 12.020c.850.240 1.720.390 2.600.450v1.490c-1.320-.090-2.590-.350-3.800-.750l1.200-1.190M7.500 3H4c-.550 0-1 .450-1 1 0 9.390 7.610 17 17 17 .550 0 1-.450 1-1v-3.490c0-.550-.450-1-1-1-1.240 0-2.450-.200-3.570-.570-.100-.040-.210-.050-.310-.050-.260 0-.510.100-.710.290l-2.200 2.200c-2.830-1.450-5.150-3.760-6.590-6.590l2.200-2.200c.280-.280.360-.670.250-1.020C8.700 6.450 8.500 5.250 8.500 4c0-.550-.450-1-1-1z" />
      </svg>
    </button>
    <button class="more" aria-label="More options">
      <svg viewBox="0 0 8 26"><circle cx="4" cy="4" r="3" /><circle cx="4" cy="13" r="3" /><circle cx="4" cy="22" r="3" /></svg>
    </button>
  </header>

  <div class="screen">
    <svg class="wallpaper" viewBox="0 121 554 1009" preserveAspectRatio="xMidYMin slice" aria-hidden="true">
      {#each sections as s}
        <g transform="translate({s.x} {s.y}) scale({s.sx} {third})">
          {#each s.dots as [cx, cy, r]}
            <circle {cx} {cy} {r} />
          {/each}
          {#each s.lines as d}
            <path {d} />
          {/each}
        </g>
      {/each}
    </svg>

    <main>
      <div class="day">Today</div>
      <p class="notice">
        <svg viewBox="0 0 16 22" aria-hidden="true">
          <path d="M4 8V5.500a4 4 0 0 1 8 0V8" fill="none" stroke="#fdd279" stroke-width="2" />
          <path fill-rule="evenodd" d="M2 7.500h12a2 2 0 0 1 2 2V19a2 2 0 0 1-2 2H2a2 2 0 0 1-2-2V9.500a2 2 0 0 1 2-2zm6 4.500a2 2 0 1 0 0 4 2 2 0 0 0 0-4z" />
        </svg>
        Messages and calls are <span>end-to-end</span> encrypted. Only people in this chat can read, listen to, or
        share them. <a href="#learn">Learn more</a>
      </p>

      <div class="bubble short">
        <svg class="tail" viewBox="0 0 24 20" aria-hidden="true"><path d="M0 0h21q5 0 2 4L13 15v5H0z" /></svg>
        <span>{messages.first}</span>
        <span class="meta">{messages.time} {@render ticks()}</span>
      </div>

      <div class="bubble long">
        <svg class="redacted" viewBox="0 0 410 74" role="img" aria-label="Hidden text">
          <path d="M1 70 7 53M0 70h8M158 68v4M158 63v2M30 72h5M95 72h4M318 72h7" stroke="#53bdeb" stroke-width="2" />
          <path d="M0 0h359v36H0zM8 40h149v32H8zM160 40h248v32H160z" />
        </svg>
        <div class="last">
          <a href="#location">{messages.second}</a>
          <span class="meta">{messages.time} {@render ticks()}</span>
        </div>
      </div>
    </main>

    <form class="composer" onsubmit={(e) => e.preventDefault()}>
      <div class="field">
        <button type="button" aria-label="Stickers">
          <svg viewBox="0 0 30 30">
            <path d="M10 2h10q8 0 8 8v8L18 28h-8q-8 0-8-8V10q0-8 8-8z" />
            <path d="M28 17h-5q-5 0-5 5v6" stroke-width="2" />
            <path d="M8 17h10l-3 4q-5 1-7-4z" fill="#8d9599" stroke="none" />
            <circle cx="10" cy="11" r="1" stroke-width="2" /><circle cx="20" cy="11" r="1" stroke-width="2" />
          </svg>
        </button>
        <input type="text" placeholder="Message" aria-label="Message" bind:value={draft} />
        <button type="button" aria-label="Attach">
          <svg viewBox="0 0 30 30">
            <path d="M23 7v13a8 8 0 0 1-16 0V8a6 6 0 0 1 12 0v12a4 4 0 0 1-8 0V8" stroke-width="2.500" />
          </svg>
        </button>
        <button type="button" aria-label="Payment">
          <svg viewBox="0 0 30 30">
            <circle cx="15" cy="15" r="13" />
            <path d="M10.500 9h9M10.500 13h9M11 9q6 0 6 4t-6 4l6 5.500" stroke-width="2" />
          </svg>
        </button>
        <button type="button" aria-label="Camera">
          <svg viewBox="0 0 30 30">
            <path d="M2 7h6l3-4h8l3 4h6v20H2z" />
            <circle cx="15" cy="16" r="5" />
          </svg>
        </button>
      </div>
      <button type="button" class="mic" aria-label="Record voice message">
        <svg viewBox="0 0 22 30">
          <rect x="6.500" y="1" width="9" height="18" rx="4.500" fill="#0b1014" stroke="none" />
          <path d="M2 14.500q0 8 9 8t9-8M11 22v7" />
        </svg>
      </button>
    </form>
  </div>

  <nav>
    <button aria-label="Recent apps"><svg viewBox="0 0 24 24"><path d="M3 1v22M12 1v22M21 1v22" /></svg></button>
    <button aria-label="Home"><svg viewBox="0 0 24 24"><rect x="1" y="1" width="22" height="22" rx="7" /></svg></button>
    <button aria-label="Back"><svg viewBox="0 0 24 24"><path d="M18 1 5 12l13 11" /></svg></button>
  </nav>
</div>

<style>
  :global(body) {
    margin: 0;
    background: #000;
  }
  .phone {
    display: flex;
    flex-direction: column;
    min-height: 100vh;
    background: #0b1014;
    color: #f1f3f4;
    font-family: Roboto, sans-serif;
  }
  button {
    display: grid;
    place-items: center;
    padding: 0;
    border: 0;
    background: none;
    color: inherit;
  }
  svg {
    display: block;
  }

  .status {
    display: flex;
    align-items: center;
    height: 52px;
    padding: 0 34px 0 28px;
  }
  .clock {
    width: 62px;
    font-size: 19px;
    font-weight: 500;
  }
  .notes {
    width: 88px;
    height: 20px;
  }
  .signal {
    width: 66px;
    height: 22px;
    margin: 0 4px 0 auto;
  }
  .battery {
    display: flex;
    align-items: center;
    justify-content: center;
    gap: 2px;
    width: 40px;
    height: 22px;
    border-radius: 11px;
    background: linear-gradient(90deg, #eceeef 50%, #909497 50%);
    color: #111518;
    font-size: 16px;
    font-weight: 700;
  }
  .battery svg {
    width: 12px;
    height: 12px;
  }

  header {
    display: flex;
    align-items: center;
    height: 60px;
    padding: 0 28px 8px 22px;
    border-bottom: 1px solid #15191d;
  }
  header button svg {
    fill: none;
    stroke: #f1f3f4;
    stroke-width: 3;
  }
  .back svg {
    width: 26px;
    height: 26px;
  }
  .avatar {
    width: 52px;
    height: 52px;
    margin: 0 17px 0 27px;
  }
  .act {
    fill: #d02f43;
    font-size: 12px;
    font-weight: 900;
    text-anchor: middle;
  }
  .fibernet {
    fill: #c56a77;
    font-size: 5px;
    font-weight: 700;
    text-anchor: middle;
  }
  h1 {
    flex: 1;
    margin: 0;
    font-size: 30px;
    font-weight: 400;
    white-space: nowrap;
  }
  .video {
    width: 30px;
    height: 26px;
  }
  header button .call {
    width: 30px;
    height: 30px;
    margin: 0 41px;
    fill: #f1f3f4;
    stroke: none;
  }
  header .more svg {
    width: 8px;
    height: 26px;
    fill: #f1f3f4;
    stroke: none;
  }

  .screen {
    position: relative;
    display: flex;
    flex: 1;
    flex-direction: column;
    overflow: hidden;
    background: #0a0f13;
  }
  .wallpaper {
    position: absolute;
    width: 100%;
    height: 100%;
    fill: none;
    stroke: #1e2327;
    stroke-width: 4;
    stroke-linecap: round;
    stroke-linejoin: round;
  }

  main {
    position: relative;
    display: flex;
    flex: 1;
    flex-direction: column;
    align-items: center;
    padding: 15px 25px 0;
  }
  .day {
    padding: 7px 13px;
    border-radius: 12px;
    background: #12181c;
    color: #8b9296;
    font-size: 27px;
    font-weight: 500;
    line-height: 36px;
  }
  .notice {
    box-sizing: border-box;
    max-width: 440px;
    margin: 16px 0 15px;
    padding: 11px 16px;
    border-radius: 12px;
    background: #12181c;
    color: #fdd279;
    font-size: 30px;
    line-height: 35px;
    text-align: center;
  }
  .notice span {
    white-space: nowrap;
  }
  .notice svg {
    display: inline-block;
    width: 16px;
    height: 22px;
    margin-right: 2px;
    fill: #fdd279;
  }
  .notice a {
    color: inherit;
    font-weight: 700;
    text-decoration: none;
  }

  .bubble {
    position: relative;
    box-sizing: border-box;
    align-self: flex-end;
    border-radius: 16px;
    background: #144d37;
    font-size: 33px;
  }
  .short {
    display: flex;
    gap: 13px;
    height: 59px;
    padding: 0 12px 0 15px;
    line-height: 58px;
  }
  .tail {
    position: absolute;
    top: 0;
    right: -11px;
    width: 24px;
    height: 20px;
    fill: #144d37;
  }
  .long {
    width: 446px;
    max-width: 100%;
    margin-top: 5px;
    padding: 13px 12px 0 14px;
  }
  .redacted {
    width: 410px;
    max-width: 100%;
  }
  .last {
    display: flex;
    align-items: flex-start;
    justify-content: space-between;
    height: 49px;
    line-height: 40px;
  }
  .last a {
    color: #53bdeb;
    text-decoration-thickness: 2px;
    text-underline-offset: 4px;
  }
  .meta {
    display: flex;
    align-items: center;
    align-self: flex-end;
    gap: 6px;
    color: #a1b8af;
    font-size: 22px;
    line-height: 36px;
  }
  .ticks {
    width: 24px;
    height: 18px;
    fill: none;
    stroke: #a1b8af;
    stroke-width: 2;
  }

  .composer {
    position: relative;
    display: flex;
    align-items: center;
    gap: 12px;
    padding: 0 13px 6px;
  }
  .field {
    display: flex;
    flex: 1;
    align-items: center;
    gap: 40px;
    min-width: 0;
    height: 68px;
    padding: 0 18px;
    border-radius: 34px;
    background: #20272b;
  }
  .field button svg {
    width: 30px;
    height: 30px;
    fill: none;
    stroke: #8d9599;
    stroke-width: 3;
  }
  input {
    flex: 1;
    min-width: 0;
    margin-left: -20px;
    padding: 0;
    border: 0;
    outline: 0;
    background: none;
    color: #f1f3f4;
    font: 31px Roboto, sans-serif;
  }
  input::placeholder {
    color: #8d9599;
    opacity: 1;
  }
  .mic {
    width: 70px;
    height: 70px;
    border-radius: 50%;
    background: #22c063;
  }
  .mic svg {
    width: 22px;
    height: 30px;
    fill: none;
    stroke: #0b1014;
    stroke-width: 3;
  }

  nav {
    display: grid;
    grid-template-columns: repeat(3, 155px);
    justify-content: center;
    height: 70px;
    padding-right: 6px;
    background: #000;
  }
  nav svg {
    width: 24px;
    height: 24px;
    fill: none;
    stroke: #b9b9b9;
    stroke-width: 2;
  }
</style>
